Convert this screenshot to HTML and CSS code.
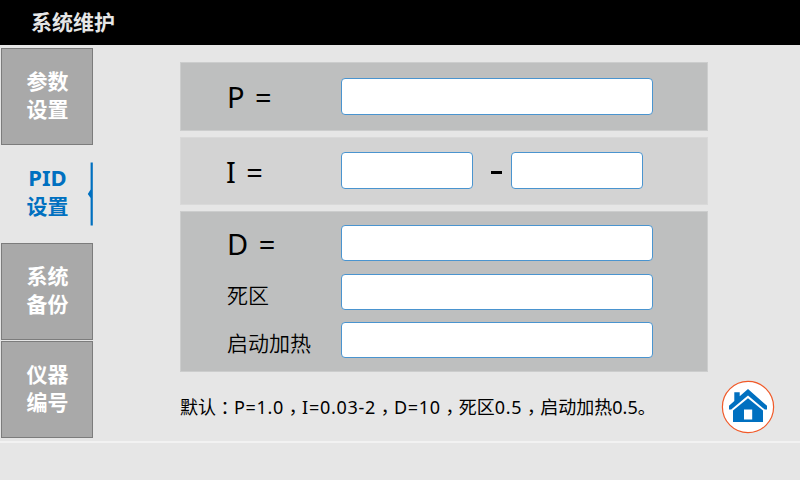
FILE: index.html
```
<!DOCTYPE html>
<html lang="zh-CN">
<head>
<meta charset="utf-8">
<title>系统维护</title>
<link rel="stylesheet" href="styles.css">
</head>
<body>
<header class="topbar"><h1>系统维护</h1></header>
<div class="content">
  <nav class="tabs">
    <a class="tab">参数<br>设置</a>
    <a class="tab active"><span class="en">PID</span><br>设置
      <svg class="marker" width="6" height="64" viewBox="0 0 6 64"><path d="M3.6 0.5H5.8V63.5H3.6V36L0.8 32L3.6 27.5Z" fill="#0070c0"/></svg>
    </a>
    <a class="tab">系统<br>备份</a>
    <a class="tab">仪器<br>编号</a>
  </nav>
  <main class="form">
    <section class="panel panel-p">
      <label class="big">P =</label><input class="field">
    </section>
    <section class="panel panel-i">
      <label class="big">I =</label><input class="field half"><span class="dash"></span><input class="field half">
    </section>
    <section class="panel panel-d">
      <div class="row"><label class="big">D =</label><input class="field"></div>
      <div class="row"><label>死区</label><input class="field"></div>
      <div class="row"><label>启动加热</label><input class="field"></div>
    </section>
    <p class="note">默认<span class="punct colon" lang="zh-TW">：</span><span class="en">P=1.0</span><span class="punct" lang="zh-TW">，</span><span class="en">I=0.03-2</span><span class="punct" lang="zh-TW">，</span><span class="en">D=10</span><span class="punct" lang="zh-TW">，</span>死区<span class="en">0.5</span><span class="punct" lang="zh-TW">，</span>启动加热0.5。</p>
  </main>
  <a class="home">
    <svg width="54" height="54" viewBox="0 0 54 54">
      <circle cx="27" cy="27" r="25.6" fill="#fff" stroke="#f15a29" stroke-width="1.2"/>
      <g fill="#0070c0">
        <path d="M13.3 12.3H18.7V16.2L27 9L46 25.8V29.6H43.8L27 15.6L10.2 29.6H8V25.8L13.3 21Z"/>
        <path d="M27 18.2L42 30.6V42H12V30.6ZM23 29.5V39.5H31.2V29.5Z" fill-rule="evenodd"/>
      </g>
    </svg>
  </a>
</div>
<footer class="bottombar"></footer>
</body>
</html>
```
FILE: styles.css
```
* { box-sizing: border-box; }
body {
  margin: 0;
  width: 800px;
  height: 480px;
  overflow: hidden;
  display: flex;
  flex-direction: column;
  background: #e6e6e6;
  color: #000;
  font-family: "Noto Sans", "Noto Sans CJK SC", sans-serif;
}
.topbar {
  height: 45px;
  padding-left: 31px;
  background: #000;
}
.topbar h1 {
  margin: 0;
  color: #e6e6e6;
  font-size: 21px;
  font-weight: 700;
  line-height: 44px;
}
.content {
  display: grid;
  grid-template-columns: 93px 528px 1fr;
  column-gap: 87px;
  height: 396px;
}
.tabs {
  display: flex;
  flex-direction: column;
  gap: 1px;
  padding: 3px 0 0 1px;
}
.tab {
  position: relative;
  height: 97px;
  padding: 18px 0 0 1px;
  border: 1px solid #7c7c7c;
  background: #a9a9a9;
  color: #fff;
  font-size: 21px;
  font-weight: 700;
  line-height: 28px;
  text-align: center;
}
.tab.active {
  height: 96px;
  padding-top: 16px;
  border-color: transparent;
  background: none;
  color: #0070c0;
}
.tab .en { font-size: 22px; }
.marker {
  position: absolute;
  right: -1px;
  top: 15px;
}
.form { padding-top: 17px; }
.panel {
  border: 1px solid #cccdcd;
  background: #bebfbf;
  padding-left: 46px;
  display: flex;
  margin-bottom: 6px;
}
.panel-p { height: 69px; padding-top: 15px; }
.panel-i {
  height: 68px;
  padding-top: 14px;
  background: #d3d3d3;
  border-color: #d9d9d9;
}
.panel-d {
  height: 161px;
  padding-top: 13px;
  flex-direction: column;
  gap: 12.5px;
  margin-bottom: 0;
}
.row { display: flex; height: 36px; }
label {
  width: 114px;
  font-size: 21px;
  line-height: 43px;
  font-weight: 350;
}
label.big {
  font-size: 29px;
  font-weight: 400;
  line-height: 38px;
  word-spacing: 3px;
}
.panel-i .big { line-height: 40px; margin-left: -1px; width: 115px; }
.field {
  width: 312px;
  height: 37px;
  margin: 0;
  border: 1px solid #4a94cf;
  border-radius: 4px;
  background: #fff;
}
.row .field { height: 36px; }
.half { width: 132px; }
.dash {
  width: 11px;
  height: 3px;
  margin: 19px 9px 0 18px;
  background: #000;
}
.note {
  margin: 20px 0 0;
  font-size: 18px;
  line-height: 28px;
  white-space: nowrap;
}
.note .en { letter-spacing: 0.7px; }
.punct {
  position: relative;
  top: 5px;
  font-family: "Noto Sans CJK TC", sans-serif;
}
.colon { top: 1px; }
.home {
  margin: 335px 0 0 -74px;
  width: 54px;
  height: 54px;
}
.bottombar {
  height: 39px;
  border-top: 2px solid #f2f2f2;
}
```
